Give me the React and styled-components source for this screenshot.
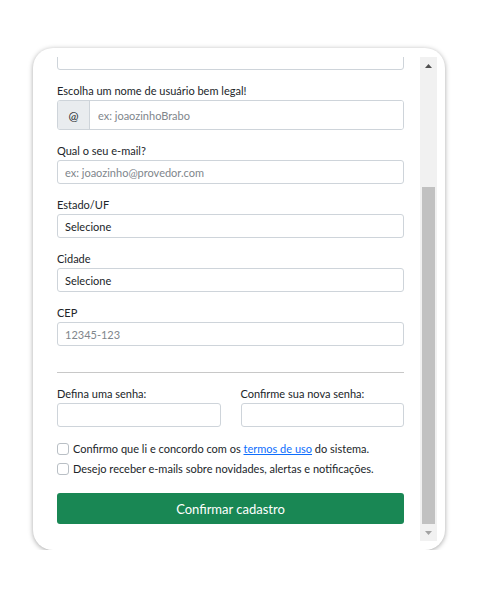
import React from "react";
import styled, { createGlobalStyle } from "styled-components";

const Global = createGlobalStyle`
  html, body { margin: 0; padding: 0; background: #ffffff; }
  body { font-family: Lato, "Noto Sans", sans-serif; color: #212529; }
  * { box-sizing: border-box; }
`;

const Page = styled.div`
  padding: 48px 0 0 33px;
`;

const Card = styled.div`
  width: 412px;
  height: 502px;
  background: #ffffff;
  border-radius: 20px;
  box-shadow: 0 1px 5px rgba(0, 0, 0, 0.35);
  padding: 9px 8px;
  display: flex;
`;

const ScrollArea = styled.div`
  flex: 1;
  display: flex;
  min-width: 0;
`;

const Viewport = styled.div`
  flex: 1;
  overflow: hidden;
  display: flex;
  flex-direction: column;
  justify-content: flex-end;
  padding: 0 16px 17px 16px;
`;

const Scrollbar = styled.div`
  width: 17px;
  background: #f1f1f1;
  display: flex;
  flex-direction: column;
`;

const ArrowButton = styled.div`
  height: 17px;
  display: flex;
  align-items: center;
  justify-content: center;
  flex-shrink: 0;
`;

const Track = styled.div`
  flex: 1;
  display: flex;
  flex-direction: column;
  justify-content: flex-end;
  padding: 0 2px;
`;

const Thumb = styled.div`
  height: 337px;
  background: #c1c1c1;
`;

const Field = styled.div`
  display: flex;
  flex-direction: column;
  gap: 2px;
  margin-bottom: 13px;
  flex-shrink: 0;
`;

const Label = styled.label`
  font-size: 11px;
  line-height: 15px;
  color: #212529;
  white-space: nowrap;
`;

const Input = styled.input`
  height: 24px;
  width: 100%;
  border: 1px solid #ced4da;
  border-radius: 3px;
  padding: 0 7px;
  font-family: inherit;
  font-size: 11px;
  color: #212529;
  background: #fff;
  outline: none;
  &::placeholder { color: #80868c; }
`;

const Select = styled.select`
  height: 24px;
  width: 100%;
  border: 1px solid #ced4da;
  border-radius: 3px;
  padding: 0 7px;
  font-family: inherit;
  font-size: 11px;
  color: #212529;
  background: #fff;
  appearance: none;
  outline: none;
`;

const Group = styled.div`
  display: flex;
  height: 30px;
  border: 1px solid #ced4da;
  border-radius: 3px;
  overflow: hidden;
`;

const Addon = styled.span`
  width: 32px;
  background: #e9ecef;
  border-right: 1px solid #ced4da;
  display: flex;
  align-items: center;
  justify-content: center;
  font-size: 12px;
  color: #212529;
`;

const GroupInput = styled(Input)`
  flex: 1;
  height: 100%;
  border: none;
  border-radius: 0;
  padding: 0 8px;
`;

const Divider = styled.hr`
  border: none;
  border-top: 1px solid #c8c8c8;
  margin: 13px 0 13px 0;
  flex-shrink: 0;
`;

const Row = styled.div`
  display: grid;
  grid-template-columns: 1fr 1fr;
  column-gap: 20px;
  flex-shrink: 0;
`;

const Checks = styled.div`
  display: flex;
  flex-direction: column;
  margin-top: -1px;
  flex-shrink: 0;
`;

const CheckRow = styled.label`
  display: flex;
  align-items: center;
  gap: 4px;
  font-size: 11px;
  line-height: 20px;
  color: #212529;
  white-space: nowrap;
`;

const Box = styled.input.attrs({ type: "checkbox" })`
  appearance: none;
  width: 12px;
  height: 12px;
  margin: 0;
  border: 1px solid #b9bfc5;
  border-radius: 3px;
  background: #fff;
  flex-shrink: 0;
`;

const Link = styled.a`
  color: #0d6efd;
  text-decoration: underline;
`;

const Button = styled.button`
  margin-top: 14px;
  height: 31px;
  width: 100%;
  border: none;
  border-radius: 3px;
  background: #198754;
  color: #ffffff;
  font-family: inherit;
  font-size: 13px;
  flex-shrink: 0;
`;

export default function App() {
  return (
    <>
      <Global />
      <Page>
        <Card>
          <ScrollArea>
            <Viewport>
              <Field>
                <Label>Nome completo</Label>
                <Input />
              </Field>
              <Field>
                <Label>Escolha um nome de usuário bem legal!</Label>
                <Group>
                  <Addon>@</Addon>
                  <GroupInput placeholder="ex: joaozinhoBrabo" />
                </Group>
              </Field>
              <Field>
                <Label>Qual o seu e-mail?</Label>
                <Input placeholder="ex: joaozinho@provedor.com" />
              </Field>
              <Field>
                <Label>Estado/UF</Label>
                <Select defaultValue="">
                  <option value="">Selecione</option>
                </Select>
              </Field>
              <Field>
                <Label>Cidade</Label>
                <Select defaultValue="">
                  <option value="">Selecione</option>
                </Select>
              </Field>
              <Field>
                <Label>CEP</Label>
                <Input placeholder="12345-123" />
              </Field>
              <Divider />
              <Row>
                <Field>
                  <Label>Defina uma senha:</Label>
                  <Input type="password" />
                </Field>
                <Field>
                  <Label>Confirme sua nova senha:</Label>
                  <Input type="password" />
                </Field>
              </Row>
              <Checks>
                <CheckRow>
                  <Box />
                  <span>
                    Confirmo que li e concordo com os <Link href="#">termos de uso</Link> do sistema.
                  </span>
                </CheckRow>
                <CheckRow>
                  <Box />
                  <span>Desejo receber e-mails sobre novidades, alertas e notificações.</span>
                </CheckRow>
              </Checks>
              <Button>Confirmar cadastro</Button>
            </Viewport>
            <Scrollbar>
              <ArrowButton>
                <svg width="7" height="4" viewBox="0 0 7 4">
                  <polygon points="0,4 3.5,0 7,4" fill="#505050" />
                </svg>
              </ArrowButton>
              <Track>
                <Thumb />
              </Track>
              <ArrowButton>
                <svg width="7" height="4" viewBox="0 0 7 4">
                  <polygon points="0,0 7,0 3.5,4" fill="#a3a3a3" />
                </svg>
              </ArrowButton>
            </Scrollbar>
          </ScrollArea>
        </Card>
      </Page>
    </>
  );
}
